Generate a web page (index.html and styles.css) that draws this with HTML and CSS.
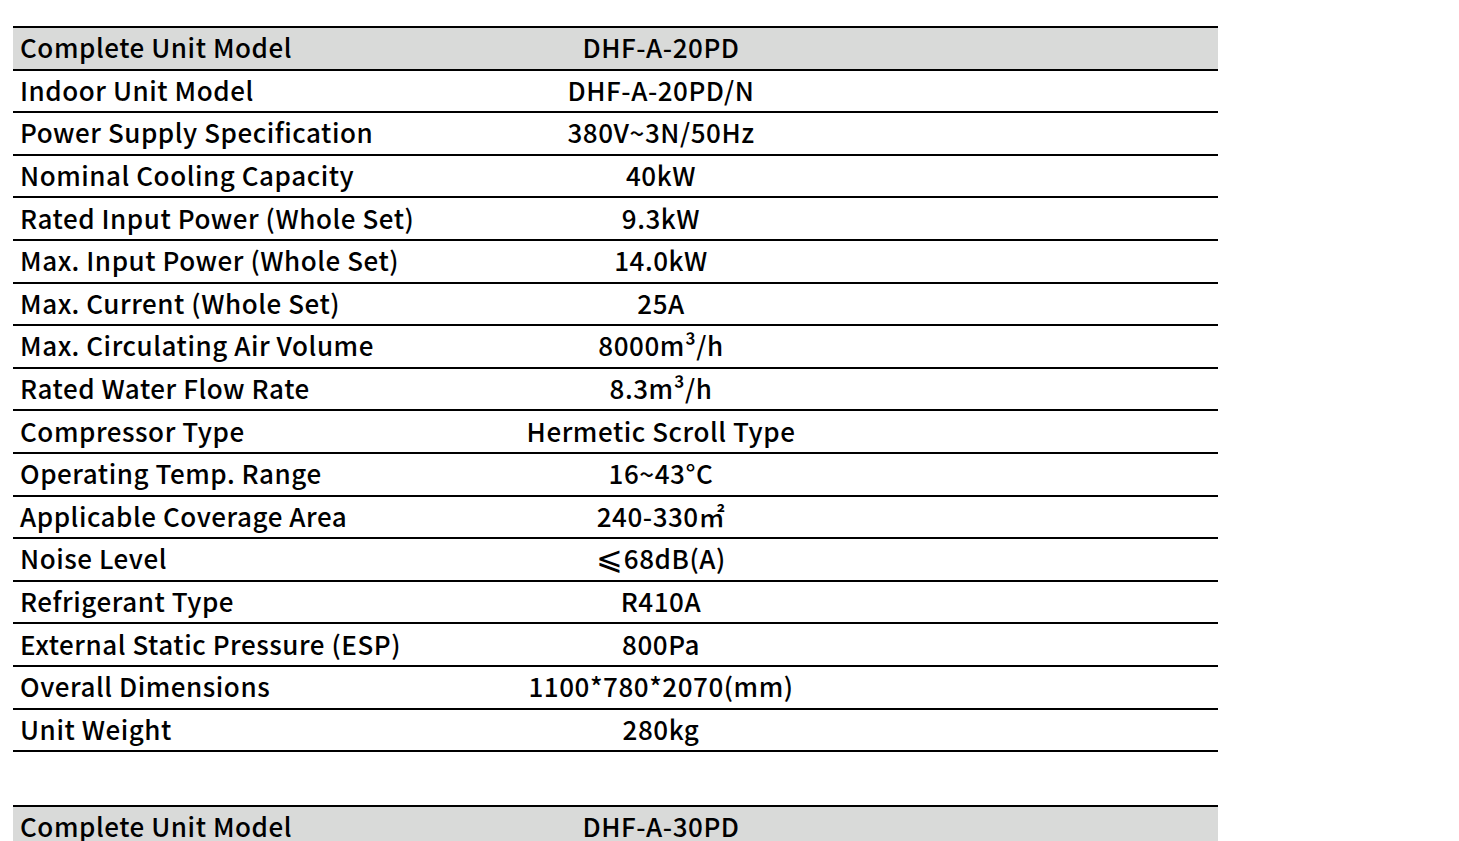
FILE: index.html
```html
<!DOCTYPE html>
<html>
<head>
<meta charset="utf-8">
<link rel="stylesheet" href="styles.css">
</head>
<body>
<div class="page">
<table class="spec">
<colgroup><col class="c1"><col class="c2"><col class="c3"></colgroup>
<tr class="head"><td class="label">Complete Unit Model</td><td class="val">DHF-A-20PD</td><td></td></tr>
<tr><td class="label">Indoor Unit Model</td><td class="val">DHF-A-20PD/N</td><td></td></tr>
<tr><td class="label">Power Supply Specification</td><td class="val">380V~3N/50Hz</td><td></td></tr>
<tr><td class="label">Nominal Cooling Capacity</td><td class="val">40kW</td><td></td></tr>
<tr><td class="label">Rated Input Power (Whole Set)</td><td class="val">9.3kW</td><td></td></tr>
<tr><td class="label">Max. Input Power (Whole Set)</td><td class="val">14.0kW</td><td></td></tr>
<tr><td class="label">Max. Current (Whole Set)</td><td class="val">25A</td><td></td></tr>
<tr><td class="label">Max. Circulating Air Volume</td><td class="val">8000m³/h</td><td></td></tr>
<tr><td class="label">Rated Water Flow Rate</td><td class="val">8.3m³/h</td><td></td></tr>
<tr><td class="label">Compressor Type</td><td class="val">Hermetic Scroll Type</td><td></td></tr>
<tr><td class="label">Operating Temp. Range</td><td class="val">16~43°C</td><td></td></tr>
<tr><td class="label">Applicable Coverage Area</td><td class="val">240-330㎡</td><td></td></tr>
<tr><td class="label">Noise Level</td><td class="val"><span class="sym">⩽</span>68dB(A)</td><td></td></tr>
<tr><td class="label">Refrigerant Type</td><td class="val">R410A</td><td></td></tr>
<tr><td class="label">External Static Pressure (ESP)</td><td class="val">800Pa</td><td></td></tr>
<tr><td class="label">Overall Dimensions</td><td class="val">1100*780*2070(mm)</td><td></td></tr>
<tr><td class="label">Unit Weight</td><td class="val">280kg</td><td></td></tr>
</table>
<table class="spec">
<colgroup><col class="c1"><col class="c2"><col class="c3"></colgroup>
<tr class="head"><td class="label">Complete Unit Model</td><td class="val">DHF-A-30PD</td><td></td></tr>
<tr><td class="label">Indoor Unit Model</td><td class="val">DHF-A-30PD/N</td><td></td></tr>
</table>
</div>
</body>
</html>
```
FILE: styles.css
```css
html, body {
  margin: 0;
  padding: 0;
  background: #fff;
}
.page {
  padding: 26px 0 0 13px;
  display: flex;
  flex-direction: column;
  gap: 53px;
  font-family: "Noto Sans CJK SC", "Noto Sans", sans-serif;
  color: #000;
}
.spec {
  width: 1205px;
  border-collapse: collapse;
  table-layout: fixed;
  border-top: 2px solid #000;
}
.spec .c1 { width: 427px; }
.spec .c2 { width: 442px; }
.spec tr {
  height: 42.6px;
  border-bottom: 2px solid #000;
}
.spec td {
  padding: 0;
  font-size: 26px;
  font-weight: 500;
  letter-spacing: 0.55px;
  line-height: 1;
  vertical-align: middle;
  white-space: nowrap;
}
.spec .label {
  padding-left: 7px;
  padding-bottom: 2px;
}
.spec .val {
  text-align: center;
  padding-bottom: 2px;
}
.spec .sym {
  font-size: 32px;
  line-height: 0;
}
.spec .head {
  background: #d9dad9;
}
```
